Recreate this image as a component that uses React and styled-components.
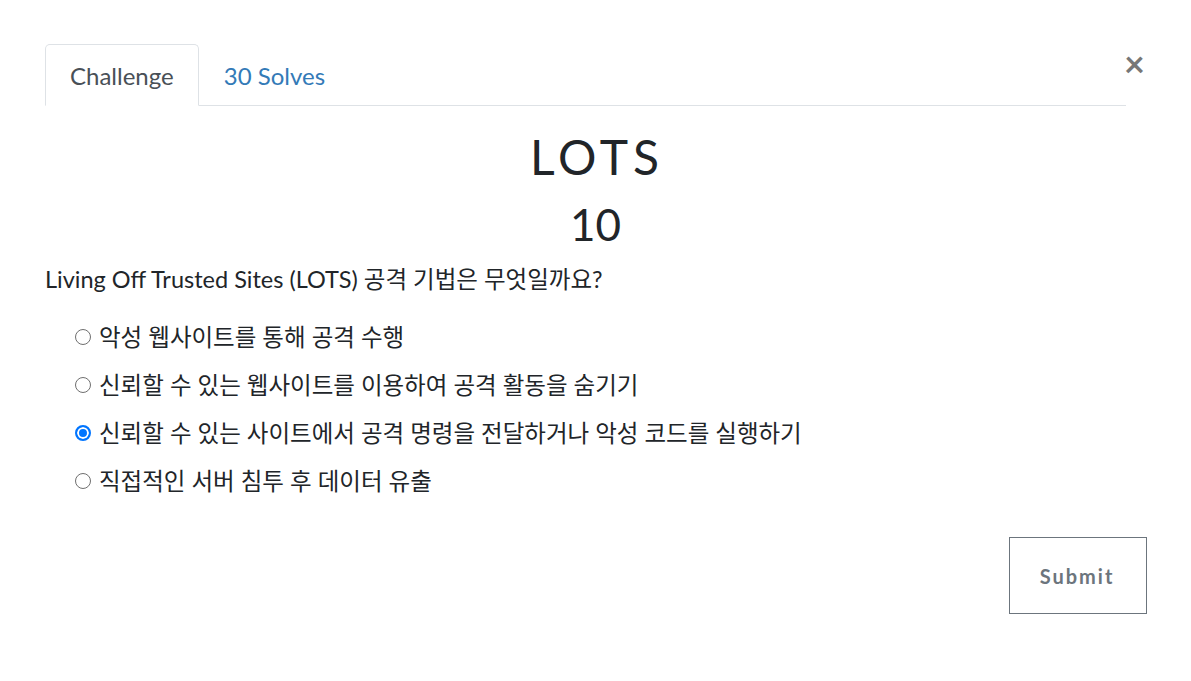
import styled, { createGlobalStyle } from "styled-components";

const Global = createGlobalStyle`
  html, body { margin: 0; padding: 0; background: #fff; }
  body { font-family: Lato, "Noto Sans CJK KR", sans-serif; color: #212529; }
`;

const Modal = styled.div`
  width: 1191px;
  height: 681px;
  box-sizing: border-box;
  padding: 44px 45px 0 45px;
  position: relative;
`;

const Close = styled.button`
  position: absolute;
  top: 45px;
  right: 46px;
  border: 0;
  background: none;
  padding: 0;
  font-family: Lato, sans-serif;
  font-size: 36px;
  font-weight: 700;
  line-height: 1;
  color: #777;
  cursor: pointer;
`;

const Tabs = styled.ul`
  display: flex;
  list-style: none;
  margin: 0 20px 0 0;
  padding: 0;
  border-bottom: 1px solid #dee2e6;
`;

const Tab = styled.li`
  margin-bottom: -1px;
  padding: 15px 24px 14px;
  font-size: 24px;
  line-height: 31px;
  border: 1px solid ${(p) => (p.$active ? "#dee2e6" : "transparent")};
  border-bottom-color: ${(p) => (p.$active ? "#fff" : "transparent")};
  border-radius: 5px 5px 0 0;
  background: ${(p) => (p.$active ? "#fff" : "transparent")};
  color: ${(p) => (p.$active ? "#495057" : "#337ab7")};
`;

const Title = styled.h2`
  margin: 22px 0 0;
  text-align: center;
  font-weight: 400;
  font-size: 48px;
  line-height: 58px;
  letter-spacing: 5px;
  padding-left: 3px;
  color: #212529;
`;

const Value = styled.h3`
  margin: 7px 0 0;
  text-align: center;
  font-weight: 400;
  font-size: 44px;
  line-height: 62px;
  color: #212529;
`;

const Question = styled.p`
  margin: 9px 0 0;
  font-size: 23.5px;
  line-height: 30px;
`;

const Options = styled.div`
  display: flex;
  flex-direction: column;
  gap: 18px;
  margin-top: 28px;
  padding-left: 30px;
`;

const Option = styled.label`
  display: flex;
  align-items: center;
  gap: 8px;
  font-size: 23.5px;
  line-height: 30px;
`;

const Radio = styled.input`
  appearance: none;
  flex-shrink: 0;
  box-sizing: border-box;
  margin: 0;
  width: 16px;
  height: 16px;
  border-radius: 50%;
  border: 1px solid #6f6f6f;
  background: #fff;

  &:checked {
    border: 2px solid #0075ff;
    background: #0075ff;
    box-shadow: inset 0 0 0 2px #fff;
  }
`;

const Footer = styled.div`
  display: flex;
  justify-content: flex-end;
  margin-top: 41px;
  margin-right: -1px;
`;

const Submit = styled.button`
  width: 138px;
  height: 77px;
  background: #fff;
  border: 1px solid #6c757d;
  border-radius: 0;
  font-family: Lato, sans-serif;
  font-weight: 700;
  font-size: 20px;
  letter-spacing: 2px;
  padding-left: 4px;
  color: #6c757d;
`;

const options = [
  "악성 웹사이트를 통해 공격 수행",
  "신뢰할 수 있는 웹사이트를 이용하여 공격 활동을 숨기기",
  "신뢰할 수 있는 사이트에서 공격 명령을 전달하거나 악성 코드를 실행하기",
  "직접적인 서버 침투 후 데이터 유출",
];

export default function App() {
  return (
    <>
      <Global />
      <Modal>
        <Close aria-label="Close">×</Close>
        <Tabs>
          <Tab $active>Challenge</Tab>
          <Tab>30 Solves</Tab>
        </Tabs>
        <Title>LOTS</Title>
        <Value>10</Value>
        <Question>Living Off Trusted Sites (LOTS) 공격 기법은 무엇일까요?</Question>
        <Options>
          {options.map((o, i) => (
            <Option key={i}>
              <Radio type="radio" name="answer" defaultChecked={i === 2} />
              {o}
            </Option>
          ))}
        </Options>
        <Footer>
          <Submit>Submit</Submit>
        </Footer>
      </Modal>
    </>
  );
}
